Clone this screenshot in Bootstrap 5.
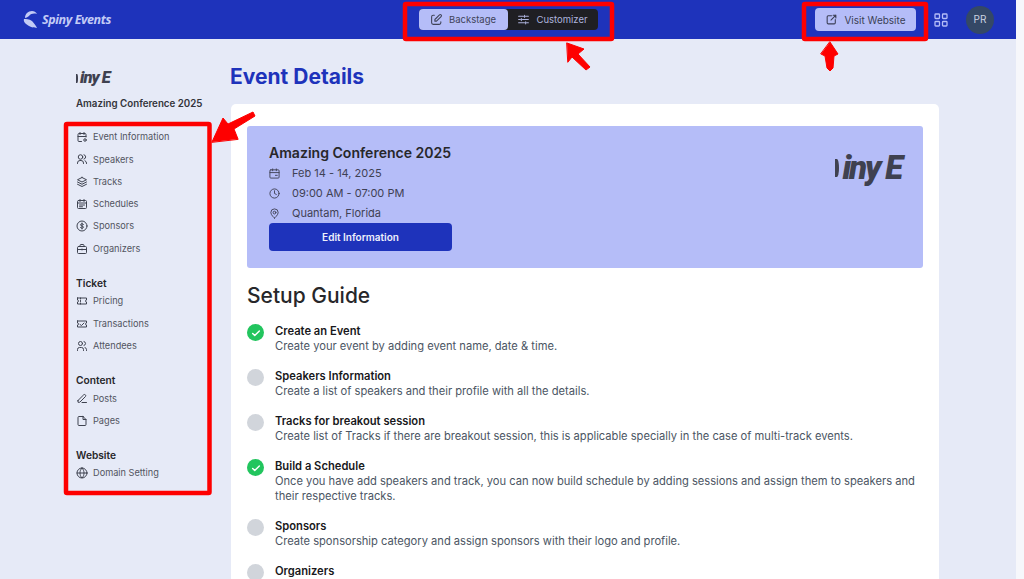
<!DOCTYPE html>
<html lang="en">
<head>
  <meta charset="UTF-8" />
  <meta name="viewport" content="width=device-width, initial-scale=1.0"/>
  <title>Event Details</title>
  <link href="https://cdn.jsdelivr.net/npm/bootstrap@5.3.0/dist/css/bootstrap.min.css" rel="stylesheet"/>
  <style>
    html, body { height: 579px; overflow: hidden; }
    body { background: #f6f7fb; font-family: Inter, "Liberation Sans", sans-serif; color: #27272a; }
    .app-shell { width: 1016px; height: 579px; background: #e6eaf7; overflow: hidden; }
    svg { fill: none; stroke: currentColor; stroke-width: 2; stroke-linecap: round; stroke-linejoin: round; flex: none; }

    /* top bar */
    .top-bar { height: 39px; background: #1e33bb; padding: 0 22px; }
    .bar-side { flex: 1 1 0; }
    .brand-ico { fill: #c3cbf6; stroke: none; }
    .brand-name { font: italic 700 12.5px "Open Sans", sans-serif; letter-spacing: -.4px; color: #c3cbf6; }
    .seg-wrap { background: #1f1f23; border-radius: 4px; height: 21px; }
    .seg-btn { height: 21px; padding: 0 10px; font-size: 9.5px; line-height: 1; border: 0; border-radius: 4px; gap: 6px; }
    .seg-on { background: #b5bdf8; color: #3f4358; width: 89px; }
    .seg-off { background: transparent; color: #aeb4de; width: 90px; }
    .visit-btn { width: 101px; height: 23px; background: #b5bdf8; color: #3b3f55; border: 0; border-radius: 4px; font-size: 10px; line-height: 1; gap: 6px; padding: 0; }
    .avatar-dot { width: 28px; height: 28px; border-radius: 50%; background: #344866; color: #ccd4e0; font-size: 10px; margin-left: 18px; }
    .grid-ico { color: #b5bdf8; stroke-width: 1.3; margin-left: 18px; }

    /* cropped event logo */
    .crop-logo { color: #3f4150; font-family: Roboto, sans-serif; font-style: italic; font-weight: 900; white-space: nowrap; }
    .logo-sliver { background: #3f4150; border-radius: 0 50% 50% 0 / 0 50% 50% 0; flex: none; }
    .crop-side { height: 24px; font-size: 16.5px; line-height: 24px; letter-spacing: -1px; gap: 2px; }
    .crop-side .logo-sliver { width: 2px; height: 9px; }
    .crop-hero { height: 46px; font-size: 33px; line-height: 46px; letter-spacing: -2.2px; gap: 4px; margin-top: 1px; }
    .crop-hero .logo-sliver { width: 4px; height: 18px; }

    /* sidebar */
    .page-body { padding-left: 76px; }
    .side-col { width: 154px; flex: none; padding-top: 27px; }
    .side-title { font-size: 9.75px; font-weight: 600; margin: 7px 0 15px; line-height: 14px; color: #33343a; }
    .side-head { font-size: 10.2px; font-weight: 600; line-height: 14px; margin: 16.3px 0 0; color: #27272a; }
    .side-link { height: 22.3px; gap: 5px; font-size: 9.2px; color: #52555f; text-decoration: none; }
    .side-link svg { color: #3f4350; }

    /* main */
    .main-col { width: 708px; margin-left: 1px; padding-top: 23px; }
    .page-title { font-size: 21px; font-weight: 700; color: #1e33bb; line-height: 30px; margin: 0 0 12px -1px; }
    .detail-card { border: 0; border-radius: 5px; padding: 22px 16px 0; height: 600px; }
    .hero-box { height: 142px; background: #b5bdf8; border-radius: 3px; padding: 18px 22px 0; }
    .hero-title { font-size: 14.05px; font-weight: 600; line-height: 18px; margin: 0 0 1px; color: #27272a; }
    .hero-line { height: 20px; gap: 12px; font-size: 11px; color: #3f4154; }
    .edit-btn { width: 183px; height: 28px; padding: 0; background: #1e33bb; border: 0; border-radius: 4px; color: #eef0fb; font-size: 10px; font-weight: 600; }
    .guide-title { font-size: 21px; font-weight: 500; line-height: 28px; margin: 14px 0 14px; color: #27272a; }
    .guide-row { gap: 11px; margin-bottom: 15px; }
    .guide-dot { width: 17px; height: 17px; border-radius: 50%; background: #d1d5db; flex: none; color: #fff; }
    .dot-done { background: #22c55e; }
    .check-ico { stroke-width: 3.5; }
    .guide-name { font-size: 11.2px; font-weight: 600; line-height: 15px; color: #18181b; }
    .guide-text { font-size: 11.15px; line-height: 15px; color: #4b5563; }

    /* red markers drawn on the screenshot */
    .mark-layer { position: absolute; top: 0; left: 0; width: 1024px; height: 579px; pointer-events: none; }
    .mark-layer rect { stroke: #fe0000; stroke-width: 4.5; fill: none; }
    .mark-layer polygon { fill: #fe0000; stroke: #fe0000; stroke-width: 1; }
  </style>
</head>
<body>
  <div class="app-shell">
    <!-- Top bar -->
    <nav class="navbar top-bar d-flex flex-nowrap align-items-center">
      <div class="bar-side d-flex align-items-center gap-1">
        <svg class="brand-ico" width="16" height="19" viewBox="0 0 16 19"><path d="M3 8C3 4 6 1 10 1c2 0 4 1 5 3-3-1-6-.5-8 2-1.500 1-3 2-4 2z"/><path d="M2 9c2 0 5 0 8 2 2 2 4 5 5 7-3-1-5 0-8-2-3-2-6-4-5-7z"/></svg>
        <span class="brand-name">Spiny Events</span>
      </div>
      <div class="seg-wrap d-flex">
        <button class="btn seg-btn seg-on d-flex align-items-center justify-content-center">
          <svg width="13" height="13" viewBox="0 0 24 24"><path d="M8 4H6a3 3 0 0 0-3 3v11a3 3 0 0 0 3 3h11a3 3 0 0 0 3-3v-2"/><path d="M9 15h3l8.500-8.500a2.100 2.100 0 0 0-3-3L9 12v3z"/></svg>Backstage
        </button>
        <button class="btn seg-btn seg-off d-flex align-items-center justify-content-center">
          <svg width="13" height="13" viewBox="0 0 24 24"><path d="M3 6h9M16 6h5M3 12h3M10 12h11M3 18h11M18 18h3M14 4v4M8 10v4M16 16v4"/></svg>Customizer
        </button>
      </div>
      <div class="bar-side d-flex align-items-center justify-content-end">
        <button class="btn visit-btn d-flex align-items-center justify-content-center">
          <svg width="13" height="13" viewBox="0 0 24 24"><path d="M12 5H6a2 2 0 0 0-2 2v11a2 2 0 0 0 2 2h11a2 2 0 0 0 2-2v-6"/><path d="M11 13l9-9M15 4h5v5"/></svg>Visit Website
        </button>
        <svg class="grid-ico" width="14" height="14" viewBox="0 0 14 14"><rect x="1" y="1" width="4.500" height="4.500" rx=".8"/><rect x="8.500" y="1" width="4.500" height="4.500" rx=".8"/><rect x="1" y="8.500" width="4.500" height="4.500" rx=".8"/><rect x="8.500" y="8.500" width="4.500" height="4.500" rx=".8"/></svg>
        <div class="avatar-dot d-flex align-items-center justify-content-center">PR</div>
      </div>
    </nav>

    <div class="page-body d-flex">
      <!-- Sidebar -->
      <aside class="side-col">
        <div class="crop-logo crop-side d-flex align-items-center"><span class="logo-sliver"></span><span>iny E</span></div>
        <div class="side-title">Amazing Conference 2025</div>
        <a class="side-link d-flex align-items-center" href="#"><svg width="12" height="12" viewBox="0 0 24 24"><path d="M11 21H6a2 2 0 0 1-2-2V7a2 2 0 0 1 2-2h12a2 2 0 0 1 2 2v5M16 3v4M8 3v4M4 11h16"/><circle cx="18" cy="18" r="2.500"/></svg>Event Information</a>
        <a class="side-link d-flex align-items-center" href="#"><svg width="12" height="12" viewBox="0 0 24 24"><circle cx="9" cy="8" r="4.500"/><path d="M3 21v-1a5 5 0 0 1 5-5h2a5 5 0 0 1 5 5v1M16 3.500a4.500 4.500 0 0 1 0 8.700M21 21v-1a5 5 0 0 0-3-4.500"/></svg>Speakers</a>
        <a class="side-link d-flex align-items-center" href="#"><svg width="12" height="12" viewBox="0 0 24 24"><path d="M12 3 3 7.500l9 4.500 9-4.500L12 3zM3 12l9 4.500 9-4.500M3 16.500 12 21l9-4.500"/></svg>Tracks</a>
        <a class="side-link d-flex align-items-center" href="#"><svg width="12" height="12" viewBox="0 0 24 24"><rect x="3" y="5" width="18" height="16" rx="2"/><path d="M16 3v4M8 3v4M3 10h18M7 14h10M7 17.500h6"/></svg>Schedules</a>
        <a class="side-link d-flex align-items-center" href="#"><svg width="12" height="12" viewBox="0 0 24 24"><circle cx="12" cy="12" r="10"/><path d="M15 9.200c-.5-1-1.600-1.700-3-1.700-1.700 0-3 .9-3 2.200 0 3 6 1.600 6 4.600 0 1.300-1.300 2.200-3 2.200-1.400 0-2.500-.7-3-1.700M12 6v12"/></svg>Sponsors</a>
        <a class="side-link d-flex align-items-center" href="#"><svg width="12" height="12" viewBox="0 0 24 24"><rect x="3" y="7" width="18" height="14" rx="2"/><path d="M8 7V5a2 2 0 0 1 2-2h4a2 2 0 0 1 2 2v2M3 13h18M12 12v2"/></svg>Organizers</a>

        <div class="side-head">Ticket</div>
        <a class="side-link d-flex align-items-center" href="#"><svg width="12" height="12" viewBox="0 0 24 24"><path d="M3 6h18v4a2 2 0 0 0 0 4v4H3v-4a2 2 0 0 0 0-4V6zM9 6v2M9 11v2M9 16v2"/></svg>Pricing</a>
        <a class="side-link d-flex align-items-center" href="#"><svg width="12" height="12" viewBox="0 0 24 24"><path d="M3 6h18v4a2 2 0 0 0 0 4v4H3v-4a2 2 0 0 0 0-4V6zM8 13l3 2 5-5"/></svg>Transactions</a>
        <a class="side-link d-flex align-items-center" href="#"><svg width="12" height="12" viewBox="0 0 24 24"><circle cx="9" cy="7" r="4"/><path d="M3 21v-2a4 4 0 0 1 4-4h4a4 4 0 0 1 4 4v2M16 3.100a4 4 0 0 1 0 7.800M21 21v-2a4 4 0 0 0-3-3.900"/></svg>Attendees</a>

        <div class="side-head">Content</div>
        <a class="side-link d-flex align-items-center" href="#"><svg width="12" height="12" viewBox="0 0 24 24"><path d="M4 17 15.500 5.500a2.500 2.500 0 0 1 3.500 3.500L7.500 20.500H4V17zM12 21h9"/></svg>Posts</a>
        <a class="side-link d-flex align-items-center" href="#"><svg width="12" height="12" viewBox="0 0 24 24"><path d="M14 3H6a2 2 0 0 0-2 2v14a2 2 0 0 0 2 2h12a2 2 0 0 0 2-2V9l-6-6zM14 3v6h6"/></svg>Pages</a>

        <div class="side-head">Website</div>
        <a class="side-link d-flex align-items-center" href="#"><svg width="12" height="12" viewBox="0 0 24 24"><circle cx="12" cy="12" r="10"/><path d="M2 12h20M12 2c3 3 4 6.500 4 10s-1 7-4 10c-3-3-4-6.500-4-10s1-7 4-10z"/></svg>Domain Setting</a>
      </aside>

      <!-- Main column -->
      <main class="main-col">
        <h1 class="page-title">Event Details</h1>
        <div class="card detail-card">
          <div class="hero-box d-flex justify-content-between">
            <div>
              <h5 class="hero-title">Amazing Conference 2025</h5>
              <div class="hero-line d-flex align-items-center"><svg width="11" height="11" viewBox="0 0 24 24"><rect x="2" y="4" width="20" height="18" rx="2"/><path d="M16 2v4M8 2v4M2 10h20M14 16h4"/></svg>Feb 14 - 14, 2025</div>
              <div class="hero-line d-flex align-items-center"><svg width="11" height="11" viewBox="0 0 24 24"><circle cx="12" cy="12" r="10"/><path d="M12 6v6l4 2"/></svg>09:00 AM - 07:00 PM</div>
              <div class="hero-line d-flex align-items-center"><svg width="11" height="11" viewBox="0 0 24 24"><circle cx="12" cy="10" r="3"/><path d="M12 22s-8-6.500-8-12a8 8 0 0 1 16 0c0 5.500-8 12-8 12z"/></svg>Quantam, Florida</div>
              <button class="btn edit-btn">Edit Information</button>
            </div>
            <div class="crop-logo crop-hero d-flex align-items-center"><span class="logo-sliver"></span><span>iny E</span></div>
          </div>

          <h2 class="guide-title">Setup Guide</h2>

          <div class="guide-row d-flex">
            <span class="guide-dot dot-done d-flex align-items-center justify-content-center"><svg class="check-ico" width="10" height="10" viewBox="0 0 24 24"><path d="M4 13l5 5L20 7"/></svg></span>
            <div><div class="guide-name">Create an Event</div><div class="guide-text">Create your event by adding event name, date &amp; time.</div></div>
          </div>
          <div class="guide-row d-flex">
            <span class="guide-dot"></span>
            <div><div class="guide-name">Speakers Information</div><div class="guide-text">Create a list of speakers and their profile with all the details.</div></div>
          </div>
          <div class="guide-row d-flex">
            <span class="guide-dot"></span>
            <div><div class="guide-name">Tracks for breakout session</div><div class="guide-text">Create list of Tracks if there are breakout session, this is applicable specially in the case of multi-track events.</div></div>
          </div>
          <div class="guide-row d-flex">
            <span class="guide-dot dot-done d-flex align-items-center justify-content-center"><svg class="check-ico" width="10" height="10" viewBox="0 0 24 24"><path d="M4 13l5 5L20 7"/></svg></span>
            <div><div class="guide-name">Build a Schedule</div><div class="guide-text">Once you have add speakers and track, you can now build schedule by adding sessions and assign them to speakers and their respective tracks.</div></div>
          </div>
          <div class="guide-row d-flex">
            <span class="guide-dot"></span>
            <div><div class="guide-name">Sponsors</div><div class="guide-text">Create sponsorship category and assign sponsors with their logo and profile.</div></div>
          </div>
          <div class="guide-row d-flex">
            <span class="guide-dot"></span>
            <div><div class="guide-name">Organizers</div></div>
          </div>
        </div>
      </main>
    </div>
  </div>

  <!-- Red annotations -->
  <svg class="mark-layer" viewBox="0 0 1024 579">
    <rect x="405" y="4" width="207" height="35" rx="1"/>
    <rect x="804" y="4" width="122" height="35" rx="1"/>
    <rect x="66" y="124" width="143.500" height="369" rx="1"/>
    <polygon points="212,142 223,118 228,124 253,112 255,116 234,129 238,139"/>
    <polygon points="567,43 584,49 578,54 590,67 586,70 572,57 568,62"/>
    <polygon points="830,42 838,54 834,56 833,68 830,71 827,68 825,56 821,54"/>
  </svg>

  <script src="https://cdn.jsdelivr.net/npm/bootstrap@5.3.0/dist/js/bootstrap.bundle.min.js"></script>
</body>
</html>
